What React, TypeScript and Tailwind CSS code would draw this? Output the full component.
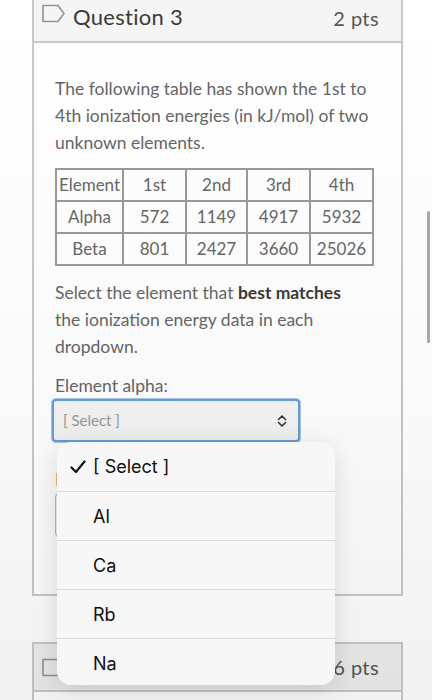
import React from "react";

const Bookmark = () => (
  <svg width="24" height="19" viewBox="0 0 24 19" fill="none">
    <path d="M1 1.5 H16 L22 9.5 L16 17.5 H1 Z" stroke="#8d949c" strokeWidth="1.6" strokeLinejoin="round" />
  </svg>
);

const UpDown = () => (
  <svg width="12" height="14" viewBox="0 0 12 14" fill="none">
    <path d="M2.5 5.5 L6 2 L9.5 5.5" stroke="#333" strokeWidth="1.6" strokeLinecap="round" strokeLinejoin="round" />
    <path d="M2.5 8.5 L6 12 L9.5 8.5" stroke="#333" strokeWidth="1.6" strokeLinecap="round" strokeLinejoin="round" />
  </svg>
);

const Check = () => (
  <svg width="16" height="14" viewBox="0 0 16 14" fill="none">
    <path d="M1.5 7.5 L6 12 L14.5 1.5" stroke="#111" strokeWidth="2.2" strokeLinecap="round" strokeLinejoin="round" />
  </svg>
);

const rows = [
  ["Element", "1st", "2nd", "3rd", "4th"],
  ["Alpha", "572", "1149", "4917", "5932"],
  ["Beta", "801", "2427", "3660", "25026"],
];
const colW = ["w-[67px]", "w-[63px]", "w-[61px]", "w-[63px]", "w-[63px]"];

export default function App() {
  return (
    <div className="relative w-[432px] h-[700px] overflow-hidden bg-white text-[#666]" style={{ fontFamily: "Lato, 'Open Sans', sans-serif" }}>
      {/* Card 1 */}
      <div className="ml-[32px] w-[371px] h-[596px] border-x-2 border-b-2 border-[#c8c8c8] flex flex-col">
        <div className="h-[43px] bg-[#f5f5f5] border-b-2 border-[#c8c8c8] flex items-start pt-[3px] pl-[8px] pr-[22px]">
          <div className="mt-[1px]"><Bookmark /></div>
          <div className="ml-[7px] text-[22px] leading-[28px] tracking-[0.3px] text-[#3a3a3a]">Question 3</div>
          <div className="ml-auto text-[20px] leading-[30px] tracking-[0.4px] text-[#555]">2 pts</div>
        </div>
        <div className="pl-[21px] pr-[12px] pt-[32px] text-[17.5px] leading-[27px]">
          <p>The following table has shown the 1st to 4th ionization energies (in kJ/mol) of two unknown elements.</p>
          <table className="mt-[12px] border-collapse text-[17px] leading-[20px] text-[#666]">
            <tbody>
              {rows.map((r, i) => (
                <tr key={i} className="h-[32px]">
                  {r.map((c, j) => (
                    <td key={j} className={`${colW[j]} border-2 border-[#9a9a9a] text-center p-0`}>{c}</td>
                  ))}
                </tr>
              ))}
            </tbody>
          </table>
          <p className="mt-[13px] w-[306px]">
            Select the element that <b className="font-bold text-[#3a3a3a]">best matches</b> the ionization energy data in each dropdown.
          </p>
          <div className="mt-[12px] leading-[27px]">Element alpha:</div>
          <div className="mt-0 w-[248px] h-[43px] rounded-[4px] border-2 border-[#6a9fd8] shadow-[0_0_0_1px_#a9c8ec] bg-[#f4f4f4] flex items-center pl-[9px] pr-[10px] -ml-[3px]">
            <span className="text-[15px] text-[#9a9a9a]">[ Select ]</span>
            <span className="ml-auto"><UpDown /></span>
          </div>
          <div className="mt-[24px] leading-[27px]">Element beta:</div>
          <div className="w-[244px] h-[44px] rounded-[4px] border border-[#bbb] bg-[#f4f4f4]" />
        </div>
      </div>

      {/* Card 2 */}
      <div className="ml-[32px] mt-[46px] w-[371px] border-2 border-[#c8c8c8]">
        <div className="h-[48px] bg-[#eeeeee] border-b-2 border-[#c8c8c8] flex items-center pl-[8px] pr-[22px]">
          <Bookmark />
          <div className="ml-[7px] text-[22px] tracking-[0.3px] text-[#3a3a3a]">Question 4</div>
          <div className="ml-auto text-[20px] tracking-[0.4px] text-[#555]">6 pts</div>
        </div>
        <div className="h-[40px] bg-white" />
      </div>

      {/* dim overlay */}
      <div className="pointer-events-none absolute inset-0 bg-gradient-to-b from-transparent via-[rgba(0,0,0,0.02)] to-[rgba(0,0,0,0.05)]" />

      {/* scrollbar */}
      <div className="absolute left-[427px] top-[211px] w-[3px] h-[132px] rounded-full bg-[#a8a8a8]" />

      {/* iOS picker dropdown */}
      <div
        className="absolute left-[57px] top-[442px] w-[278px] h-[243px] rounded-[14px] bg-[#f7f7f7] shadow-[0_4px_24px_rgba(0,0,0,0.12)] overflow-hidden text-[18px] text-[#111]"
        style={{ fontFamily: "Inter, 'Liberation Sans', sans-serif" }}
      >
        {["[ Select ]", "Al", "Ca", "Rb", "Na"].map((t, i) => (
          <div key={t} className={`h-[49px] flex items-center ${i > 0 ? "border-t border-[#dadada]" : ""}`}>
            <span className="w-[36px] pl-[13px] flex items-center">{i === 0 ? <Check /> : null}</span>
            <span>{t}</span>
          </div>
        ))}
      </div>
    </div>
  );
}
